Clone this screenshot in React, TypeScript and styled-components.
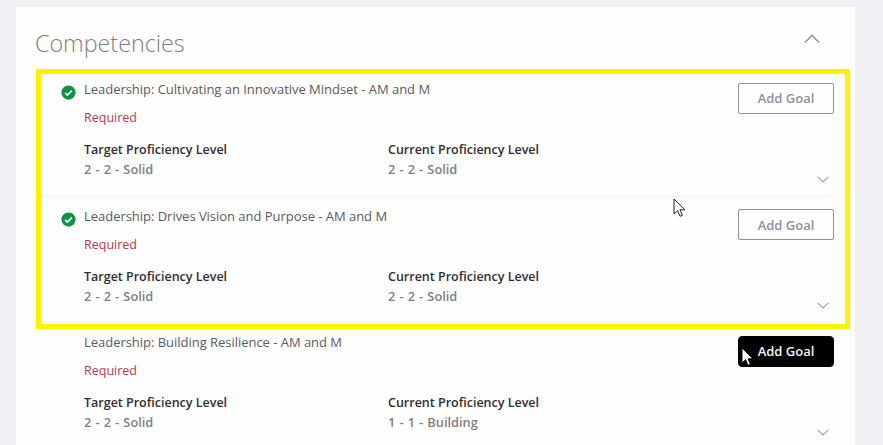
import React from "react";
import styled, { createGlobalStyle } from "styled-components";

const GlobalStyle = createGlobalStyle`
  html, body {
    margin: 0;
    padding: 0;
    height: 445px;
    overflow: hidden;
    background: #f1f0f5;
    font-family: "Open Sans", "Noto Sans", "Liberation Sans", sans-serif;
  }
`;

const Page = styled.div`
  position: relative;
  width: 883px;
  height: 445px;
  padding: 7px 28px 0 16px;
  box-sizing: border-box;
  overflow: hidden;
`;

const Card = styled.section`
  width: 839px;
  height: 438px;
  background: #fefefe;
  padding-left: 19px;
  box-sizing: border-box;
`;

const Header = styled.header`
  height: 63px;
  display: flex;
  align-items: center;
  justify-content: space-between;
  padding-right: 35px;
  box-sizing: border-box;
`;

const Title = styled.h2`
  margin: 9px 0 0;
  font-size: 23.3px;
  font-weight: 300;
  color: #807e84;
`;

const Row = styled.article`
  position: relative;
  height: 126.5px;
  width: 801px;
  padding: 0 0 0 26px;
  box-sizing: border-box;
  border-bottom: 1px solid #f3f2f6;
`;

const NameLine = styled.div`
  display: flex;
  align-items: center;
  gap: 8px;
  height: 20px;
  padding-top: 9px;
`;

const NameText = styled.span`
  font-size: 13px;
  color: #5c5a60;
  letter-spacing: -0.03px;
`;

const CheckSlot = styled.span`
  width: 15px;
  height: 15px;
  flex: none;
  margin-top: 3px;
`;

const Required = styled.div`
  margin: 9px 0 0 23px;
  height: 20px;
  line-height: 20px;
  font-size: 12.5px;
  color: #b8394e;
`;

const Levels = styled.div`
  display: grid;
  grid-template-columns: 304px 304px;
  margin: 13px 0 0 23px;
`;

const LevelLabel = styled.div`
  font-size: 12.5px;
  line-height: 18px;
  font-weight: 600;
  color: #2f2d33;
`;

const LevelValue = styled.div`
  font-size: 12.8px;
  line-height: 20px;
  font-weight: 600;
  word-spacing: 0.8px;
  color: #807e84;
`;

const GoalButton = styled.button<{ $active?: boolean }>`
  position: absolute;
  top: 12.5px;
  right: 2px;
  width: 96px;
  height: 31px;
  padding: 0;
  border-radius: ${(p) => (p.$active ? "4px" : "2px")};
  border: 1px solid ${(p) => (p.$active ? "#000" : "#929096")};
  background: ${(p) => (p.$active ? "#000" : "#fefefe")};
  color: ${(p) => (p.$active ? "#f4f4f4" : "#938f96")};
  font-family: inherit;
  font-size: 13px;
  font-weight: 600;
`;

const Expand = styled.span`
  position: absolute;
  right: 7px;
  bottom: 13px;
  display: flex;
`;

const Highlight = styled.div`
  position: absolute;
  left: 36px;
  top: 69px;
  width: 814px;
  height: 260px;
  border: 5px solid #fff200;
  box-sizing: border-box;
  pointer-events: none;
`;

const Pointer = styled.svg<{ $x: number; $y: number }>`
  position: absolute;
  left: ${(p) => p.$x}px;
  top: ${(p) => p.$y}px;
`;

const CheckIcon = () => (
  <svg width="15" height="15" viewBox="0 0 16 16">
    <circle cx="8" cy="8" r="7.6" fill="#109145" />
    <path d="M4.4 8.3l2.4 2.4 4.8-4.8" fill="none" stroke="#fff" strokeWidth="1.9" />
  </svg>
);

const ChevronUp = () => (
  <svg width="16" height="9" viewBox="0 0 16 9">
    <path d="M1 8.5L8 1.2l7 7.3" fill="none" stroke="#8f8d93" strokeWidth="1.3" />
  </svg>
);

const ChevronDown = () => (
  <svg width="12" height="7" viewBox="0 0 12 7">
    <path d="M0.6 0.8L6 6l5.4-5.2" fill="none" stroke="#a09ea4" strokeWidth="1.1" />
  </svg>
);

interface ICompetency {
  name: string;
  current: string;
  done: boolean;
  active?: boolean;
}

const competencies: ICompetency[] = [
  { name: "Leadership: Cultivating an Innovative Mindset - AM and M", current: "2 - 2 - Solid", done: true },
  { name: "Leadership: Drives Vision and Purpose - AM and M", current: "2 - 2 - Solid", done: true },
  { name: "Leadership: Building Resilience - AM and M", current: "1 - 1 - Building", done: false, active: true },
];

function App() {
  return (
    <Page>
      <GlobalStyle />
      <Card>
        <Header>
          <Title>Competencies</Title>
          <ChevronUp />
        </Header>
        {competencies.map((item) => (
          <Row key={item.name}>
            <NameLine>
              <CheckSlot>{item.done && <CheckIcon />}</CheckSlot>
              <NameText>{item.name}</NameText>
            </NameLine>
            <Required>Required</Required>
            <Levels>
              <div>
                <LevelLabel>Target Proficiency Level</LevelLabel>
                <LevelValue>2 - 2 - Solid</LevelValue>
              </div>
              <div>
                <LevelLabel>Current Proficiency Level</LevelLabel>
                <LevelValue>{item.current}</LevelValue>
              </div>
            </Levels>
            <GoalButton $active={item.active}>Add Goal</GoalButton>
            <Expand>
              <ChevronDown />
            </Expand>
          </Row>
        ))}
      </Card>
      <Highlight />
      <Pointer $x={673} $y={198} width="13" height="20" viewBox="0 0 13 20">
        <path d="M1 1v15l3.6-3.3 2.4 5.6 2.4-1-2.4-5.5H12z" fill="#fff" stroke="#222" strokeWidth="1" />
      </Pointer>
      <Pointer $x={741} $y={347} width="13" height="20" viewBox="0 0 13 20">
        <path d="M1 1v15l3.6-3.3 2.4 5.6 2.4-1-2.4-5.5H12z" fill="#fff" stroke="#111" strokeWidth="1" />
      </Pointer>
    </Page>
  );
}

export default App;
